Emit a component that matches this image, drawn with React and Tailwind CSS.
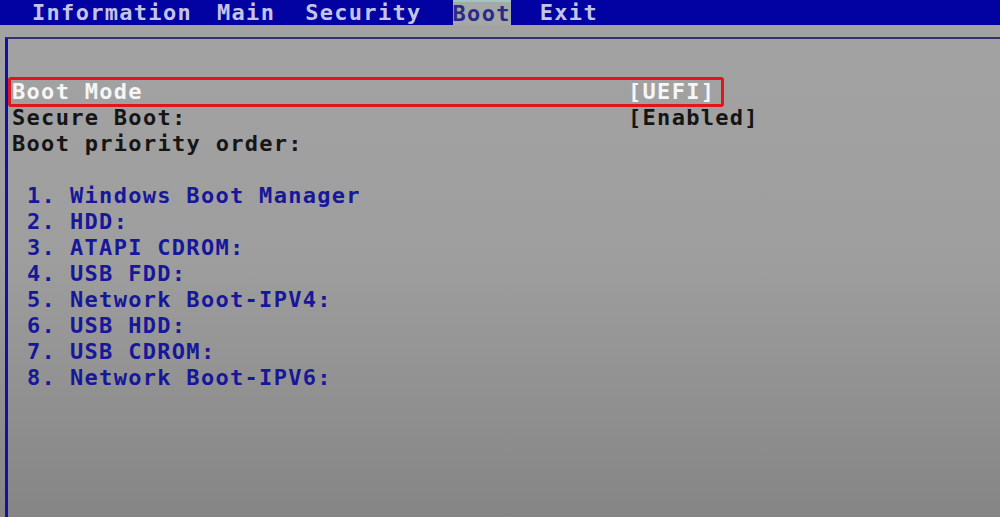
import React from "react";

const font = { fontFamily: '"DejaVu Sans Mono", "Liberation Mono", monospace' };

const tabs = [
  { label: "Information", cls: "" },
  { label: "Main", cls: "ml-[25px]" },
  { label: "Security", cls: "ml-[30px]" },
  { label: "Boot", cls: "ml-[31px]", active: true },
  { label: "Exit", cls: "ml-[29px]" },
];

const list = [
  "Windows Boot Manager",
  "HDD:",
  "ATAPI CDROM:",
  "USB FDD:",
  "Network Boot-IPV4:",
  "USB HDD:",
  "USB CDROM:",
  "Network Boot-IPV6:",
];

export default function App() {
  return (
    <div
      className="w-[1000px] h-[517px] overflow-hidden flex flex-col bg-gradient-to-b from-[#a3a3a3] via-[#9e9e9e] to-[#858585] font-bold text-[22px] tracking-[1.3px] leading-[26px]"
      style={font}
    >
      <div className="h-[25px] shrink-0 bg-[#0202a2] flex items-stretch pl-[32px] text-[#c4c4e6]">
        {tabs.map((t) => (
          <div
            key={t.label}
            className={
              t.active
                ? `${t.cls} bg-[#a6a8a8] text-[#2a2a8a] flex items-center border-t-2 border-[#9fc6c0]`
                : `${t.cls} flex items-center`
            }
          >
            {t.label}
          </div>
        ))}
      </div>
      <div className="h-[12px] shrink-0" />
      <div className="flex-1 ml-[5px] border-t-[2px] border-t-[#323270] border-l-[3px] border-l-[#1212a0] pt-[40px] pl-[4px] text-[#151515]">
        <div className="relative flex h-[26px] items-center text-[#f6f6f6]">
          <div className="w-[616px]">Boot Mode</div>
          <div>[UEFI]</div>
          <div className="absolute -left-[4px] top-[-2px] w-[716px] h-[30px] border-[3px] border-[#e0161a] rounded-[3px]" />
        </div>
        <div className="flex h-[26px] items-center">
          <div className="w-[616px]">Secure Boot:</div>
          <div>[Enabled]</div>
        </div>
        <div className="flex h-[26px] items-center">Boot priority order:</div>
        <div className="h-[26px]" />
        <div className="text-[#17179a]">
          {list.map((item, i) => (
            <div key={item} className="flex h-[26px] items-center">
              <div className="w-[58px] pl-[15px]">{i + 1}.</div>
              <div>{item}</div>
            </div>
          ))}
        </div>
      </div>
    </div>
  );
}
